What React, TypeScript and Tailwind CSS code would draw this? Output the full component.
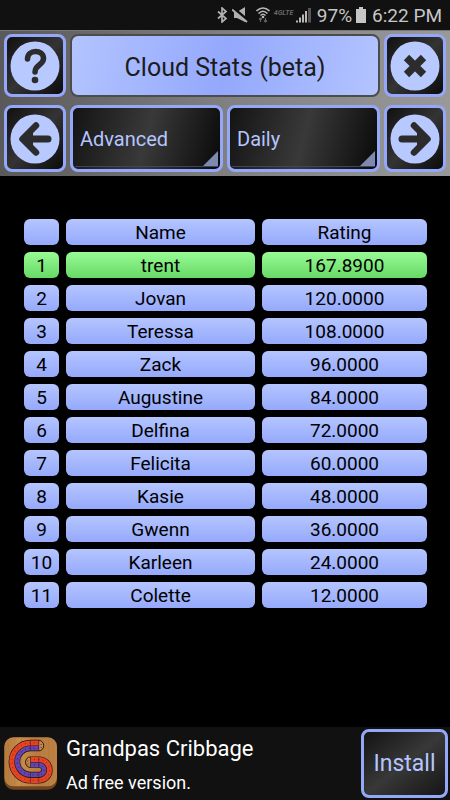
import type { ReactNode } from 'react';

interface Player {
  name: string;
  rating: string;
  highlighted?: boolean;
}

const players: Player[] = [
  { name: 'trent', rating: '167.8900', highlighted: true },
  { name: 'Jovan', rating: '120.0000' },
  { name: 'Teressa', rating: '108.0000' },
  { name: 'Zack', rating: '96.0000' },
  { name: 'Augustine', rating: '84.0000' },
  { name: 'Delfina', rating: '72.0000' },
  { name: 'Felicita', rating: '60.0000' },
  { name: 'Kasie', rating: '48.0000' },
  { name: 'Gwenn', rating: '36.0000' },
  { name: 'Karleen', rating: '24.0000' },
  { name: 'Colette', rating: '12.0000' }
];

const blueCell = 'h-[26px] rounded-md bg-linear-to-b from-[#b4c5ff] to-[#96a9fb] p-0 pt-[2px] text-center font-normal';
const greenCell = 'h-[26px] rounded-md bg-linear-to-b from-[#98fb94] to-[#66d966] p-0 pt-[2px] text-center font-normal';

function StatusBar() {
  return (
    <div className="flex h-[30px] items-center bg-[#111111] pr-2 text-[#c6c6c6]">
      <svg className="ml-auto mr-1 h-4 w-3" viewBox="0 0 12 16" fill="none" stroke="#b0b0b0" strokeWidth="1.7">
        <path d="M2 4.5l8 7-4 3.5V1l4 3.5-8 7" />
      </svg>
      <svg className="mr-2 h-4 w-4" viewBox="0 0 16 16">
        <path d="M2 5h3l8-5v15L5 11H2z" fill="#b0b0b0" />
        <path d="M1 1L16 13.5" stroke="#111111" strokeWidth="3" />
        <path d="M0 2.500L15 15" stroke="#b0b0b0" strokeWidth="2" />
      </svg>
      <svg className="mr-1 h-4 w-[14px]" viewBox="0 0 14 16" fill="none">
        <path d="M.5 4Q7-2 13.5 4M2.5 6.5Q7 2 11.5 6.5M4.5 8.5Q7 6 9.5 8.5" stroke="#b8b8b8" strokeWidth="1.6" />
        <circle cx="7" cy="10" r="1.3" fill="#b8b8b8" />
        <path d="M4.5 15v-4M3 12.5L4.5 11 6 12.5M9.5 11v4M8 13.5L9.5 15l1.5-1.5" stroke="#666666" strokeWidth="1.2" />
      </svg>
      <span className="mb-1 mr-1 w-[18px] text-[7px] leading-none font-bold text-[#666666] italic">4GLTE</span>
      <svg className="mr-[6px] h-4 w-[15px]" viewBox="0 0 15 16">
        <path d="M0 15.5v-2h2v2zM3 15.5v-5h2v5zM6 15.5v-8h2v8zM9 15.5V4h2v11.5z" fill="#b8b8b8" />
        <path d="M12 15.5V1h3v14.5z" fill="#555555" />
      </svg>
      <span className="text-[19px] leading-none">97%</span>
      <svg className="ml-1 mr-[6px] h-4 w-[10px]" viewBox="0 0 10 16" fill="#c6c6c6">
        <path d="M3 0h4v2h3v14H0V2h3z" />
      </svg>
      <span className="text-[19px] leading-none">6:22 PM</span>
    </div>
  );
}

function IconButton({ label, children }: { label: string; children: ReactNode }) {
  return (
    <button
      aria-label={label}
      className="flex w-[62px] shrink-0 items-center justify-center rounded-lg border-3 border-[#94a7f8] bg-linear-to-br from-[#111111] via-[#343434] to-[#0c0c0c]"
    >
      <svg className="size-[50px]" viewBox="0 0 50 50" fill="none" stroke="#2c2c2c" strokeLinecap="round" strokeLinejoin="round">
        <circle cx="25" cy="25" r="24.5" fill="#b7c9ff" stroke="none" />
        {children}
      </svg>
    </button>
  );
}

function SelectBox({ label, options }: { label: string; options: string[] }) {
  return (
    <div className="relative min-w-0 flex-1">
      <select
        aria-label={label}
        className="h-full w-full appearance-none rounded-lg border-3 border-[#94a7f8] bg-linear-[105deg] from-[#141414] via-[#393939] to-[#090909] px-[7px] text-xl text-[#b4c5ff]"
      >
        {options.map((option) => (
          <option key={option}>{option}</option>
        ))}
      </select>
      <div className="pointer-events-none absolute right-[5px] bottom-[5px] left-[5px] flex justify-end border-b border-[#3f465c]">
        <svg className="h-[15px] w-[15px]" viewBox="0 0 15 15">
          <path d="M15 0v15H0z" fill="#7d89ae" />
        </svg>
      </div>
    </div>
  );
}

function Toolbar() {
  return (
    <header className="flex flex-col gap-2 border-t border-[#777777] bg-linear-to-r from-[#595959] via-[#808080] to-[#999999] px-1 pt-[3px] pb-1">
      <div className="flex h-[63px] gap-1">
        <IconButton label="Help">
          <path d="M17.500 18C17.500 8 33.500 8 33.500 17.500C33.500 24 25 23.500 25 31" strokeWidth="5.500" />
          <circle cx="25" cy="39" r="3.300" fill="#2c2c2c" stroke="none" />
        </IconButton>
        <h1 className="flex flex-1 items-center justify-center rounded-lg border-2 border-[#4c4c4c] bg-linear-[100deg] from-[#b3c4ff] via-[#94a8fd] to-[#b3c4ff] pt-1 text-[25px] text-[#1c1c1c]">
          Cloud Stats (beta)
        </h1>
        <IconButton label="Close">
          <path d="M16.500 16.500l17 17M33.500 16.500l-17 17" strokeWidth="7.500" strokeLinecap="butt" />
        </IconButton>
      </div>
      <div className="flex h-[67px] gap-1">
        <IconButton label="Previous">
          <path d="M38 25H14" strokeWidth="7" />
          <path d="M26 11.500L12.500 25 26 38.500" strokeWidth="6.500" />
          <path d="M12 25l11-9v18z" fill="#2c2c2c" stroke="none" />
        </IconButton>
        <SelectBox label="Difficulty" options={['Advanced', 'Beginner']} />
        <SelectBox label="Period" options={['Daily', 'Weekly']} />
        <IconButton label="Next">
          <path d="M12 25h24" strokeWidth="7" />
          <path d="M24 11.500L37.500 25 24 38.500" strokeWidth="6.500" />
          <path d="M38 25l-11-9v18z" fill="#2c2c2c" stroke="none" />
        </IconButton>
      </div>
    </header>
  );
}

function StatsTable() {
  return (
    <table className="w-full table-fixed border-separate border-spacing-[7px] text-[19px] leading-6 text-black">
      <colgroup>
        <col className="w-[35px]" />
        <col />
        <col className="w-[165px]" />
      </colgroup>
      <thead>
        <tr>
          <td className={blueCell} />
          <th className={blueCell}>Name</th>
          <th className={blueCell}>Rating</th>
        </tr>
      </thead>
      <tbody>
        {players.map((player, index) => {
          const cell = player.highlighted ? greenCell : blueCell;
          return (
            <tr key={player.name}>
              <td className={cell}>{index + 1}</td>
              <td className={cell}>{player.name}</td>
              <td className={cell}>{player.rating}</td>
            </tr>
          );
        })}
      </tbody>
    </table>
  );
}

function CribbageLogo() {
  const red = 'M115 38H90A56.500 56.500 0 0 0 90 151H116A31.500 31.500 0 0 0 116 88H90';
  const purple = 'M115 54H90A40 40 0 0 0 90 134H116A15 15 0 0 0 116 104H90';

  return (
    <svg className="size-[53px] shrink-0" viewBox="10 20 160 160" fill="none">
      <defs>
        <linearGradient id="wood" x1="0" x2="1">
          <stop offset="0" stopColor="#b67a3c" />
          <stop offset=".3" stopColor="#c88e4d" />
          <stop offset=".6" stopColor="#b87c40" />
          <stop offset="1" stopColor="#bd8244" />
        </linearGradient>
      </defs>
      <rect x="11" y="22" width="159" height="157" rx="28" fill="#70451f" />
      <rect x="11" y="21" width="159" height="148" rx="27" fill="url(#wood)" />
      <path d="M24 40v112M42 24v140M63 22v146M145 23v142M158 38v114" stroke="#b0763a" strokeWidth="1.500" />
      <path d="M115 30a15 16 0 0 1 0 32M90 80a15 16 0 0 0 0 32" fill="#c28a4c" stroke="#2a170c" strokeWidth="3" />
      <path d={red} stroke="#2a170c" strokeWidth="19" />
      <path d={purple} stroke="#2a170c" strokeWidth="18" />
      <path d={red} stroke="#e54424" strokeWidth="15" />
      <path d={purple} stroke="#6544ad" strokeWidth="14" />
      <path d={red} stroke="#8d2414" strokeWidth="3" strokeDasharray="3 10" />
      <path d={purple} stroke="#2a175c" strokeWidth="3" strokeDasharray="3 10" />
      <path d="M90 30v32M115 30v32M90 80v32M115 80v32M90 126v33M115 126v33" stroke="#3d1520" strokeWidth="1.500" />
      <path d="M122 41v3M122 50v3M82 91v3M82 100v3" stroke="#4a2d14" strokeWidth="3" />
    </svg>
  );
}

function AdBanner() {
  return (
    <footer className="flex h-[73px] items-center bg-[#111111] pr-[2px] pl-1 text-white">
      <CribbageLogo />
      <div className="ml-[9px] flex flex-1 flex-col gap-2 pt-[2px]">
        <p className="text-[22px] leading-7">Grandpas Cribbage</p>
        <p className="text-lg leading-6">Ad free version.</p>
      </div>
      <button className="h-[69px] w-[87px] rounded-lg border-3 border-[#94a7f8] bg-linear-to-br from-[#141414] via-[#383838] to-[#161616] pt-[2px] text-[23px] text-[#b4c5ff]">
        Install
      </button>
    </footer>
  );
}

export default function App() {
  return (
    <div className="flex min-h-screen flex-col bg-black font-[Roboto,sans-serif]">
      <StatusBar />
      <Toolbar />
      <main className="flex-1 px-4 pt-9 pl-[17px]">
        <StatsTable />
      </main>
      <AdBanner />
    </div>
  );
}
